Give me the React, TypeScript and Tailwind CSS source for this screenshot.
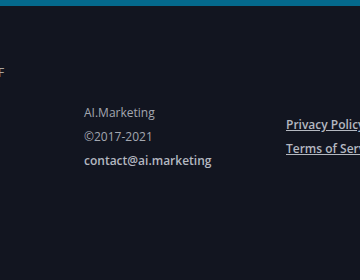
import React from 'react';

const App: React.FC = () => {
  return (
    <div className="w-[360px] h-[280px] overflow-hidden bg-[#121520] font-['Open_Sans',sans-serif] text-[12px]">
      <div className="h-[6px] bg-[#04698c]" />
      <div className="relative h-[274px]">
        <span className="absolute left-[-2px] top-[58px] leading-[18px] text-[#a9a49c]">F</span>
        <div className="flex pt-[98px] pl-[84px]">
          <div className="flex flex-col gap-[6px] w-[202px] shrink-0 text-[#a3a7b0]">
            <p className="leading-[18px]">AI.Marketing</p>
            <p className="leading-[18px]">©2017-2021</p>
            <p className="leading-[18px] font-semibold text-[#b4b8c0]">contact@ai.marketing</p>
          </div>
          <div className="flex flex-col gap-[6px] pt-[12px] whitespace-nowrap font-semibold text-[#b4b8c0]">
            <a className="leading-[18px] underline">Privacy Policy</a>
            <a className="leading-[18px] underline">Terms of Service</a>
          </div>
        </div>
      </div>
    </div>
  );
};

export default App;
